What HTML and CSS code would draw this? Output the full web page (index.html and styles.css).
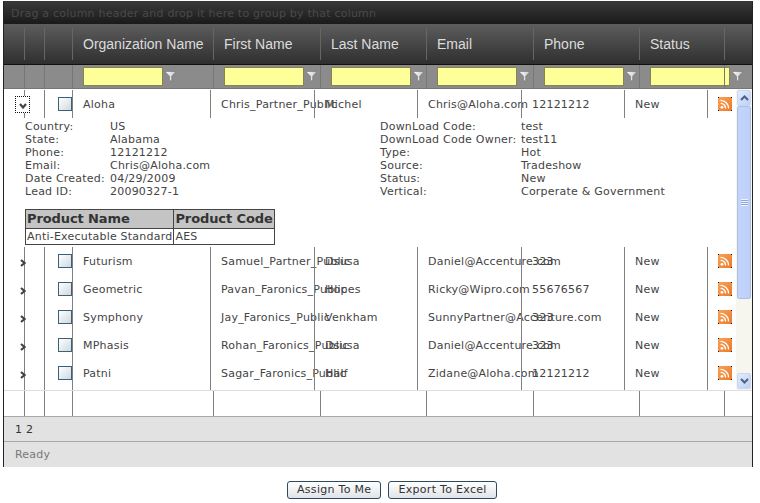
FILE: index.html
```html
<!DOCTYPE html>
<html lang="en">
<head>
<meta charset="utf-8">
<title>Leads</title>
<link rel="stylesheet" href="styles.css">
</head>
<body>
<svg class="defs" width="0" height="0" aria-hidden="true">
  <defs>
    <linearGradient id="rssg" x1="0" y1="0" x2="1" y2="1"><stop offset="0" stop-color="#f6a25a"/><stop offset="1" stop-color="#ee7a2a"/></linearGradient>
    <linearGradient id="fung" x1="0" y1="0" x2="1" y2="0"><stop offset="0" stop-color="#ffffff"/><stop offset="1" stop-color="#c8c8c8"/></linearGradient>
    <symbol id="rss" viewBox="0 0 14 14">
      <rect width="14" height="14" fill="#1a1a1a"/>
      <rect x="0" y="1" width="14" height="12" fill="url(#rssg)"/>
      <rect x="1" y="0" width="12" height="14" fill="url(#rssg)"/>
      <circle cx="4" cy="10.3" r="1.4" fill="#fff"/>
      <path d="M2.6 6.4a5 5 0 0 1 5 5M2.6 3.4a8 8 0 0 1 8 8" fill="none" stroke="#fff" stroke-width="1.4"/>
    </symbol>
    <symbol id="funnel" viewBox="0 0 11 11">
      <path d="M0 0.5H11L6.7 5.2V10.5L4.5 9V5.2Z" fill="url(#fung)" stroke="#666" stroke-width="0.5"/>
    </symbol>
    <symbol id="chev-r" viewBox="0 0 6 8"><path d="M1 1L4.5 4L1 7" fill="none" stroke="#444" stroke-width="2.2"/></symbol>
    <symbol id="chev-d" viewBox="0 0 8 6"><path d="M1 1L4 4.5L7 1" fill="none" stroke="#444" stroke-width="2.2"/></symbol>
  </defs>
</svg>
<main class="page">
  <section class="grid">
    <div class="group-bar">Drag a column header and drop it here to group by that column</div>

    <div class="cols head">
      <div class="hc"></div><div class="hc sep"></div><div class="hc sep"></div>
      <div class="hc sep">Organization Name</div>
      <div class="hc sep">First Name</div>
      <div class="hc sep">Last Name</div>
      <div class="hc sep">Email</div>
      <div class="hc sep">Phone</div>
      <div class="hc sep">Status</div>
      <div class="hc sep"></div>
    </div>

    <div class="cols filter">
      <div class="fc"></div><div class="fc sep"></div><div class="fc sep"></div>
      <div class="fc sep"><input class="fi" type="text"><svg class="funnel"><use href="#funnel"/></svg></div>
      <div class="fc sep"><input class="fi" type="text"><svg class="funnel"><use href="#funnel"/></svg></div>
      <div class="fc sep"><input class="fi" type="text"><svg class="funnel"><use href="#funnel"/></svg></div>
      <div class="fc sep"><input class="fi" type="text"><svg class="funnel"><use href="#funnel"/></svg></div>
      <div class="fc sep"><input class="fi" type="text"><svg class="funnel"><use href="#funnel"/></svg></div>
      <div class="fc sep"><input class="fi" type="text"><svg class="funnel"><use href="#funnel"/></svg></div>
      <div class="fc sep"></div>
    </div>

    <div class="viewport">
      <div class="rows">
        <div class="row first">
          <div class="c exp"><span class="focus"><svg class="chev-d"><use href="#chev-d"/></svg></span></div>
          <div class="c"></div>
          <div class="c chk"><span class="box"></span></div>
          <div class="c">Aloha</div>
          <div class="c">Chris_Partner_Public</div>
          <div class="c">Michel</div>
          <div class="c">Chris@Aloha.com</div>
          <div class="c">12121212</div>
          <div class="c">New</div>
          <div class="c ic"><svg class="rss"><use href="#rss"/></svg></div>
        </div>

        <div class="detail">
          <div class="props">
            <dl class="dl left">
              <dt>Country:</dt><dd>US</dd>
              <dt>State:</dt><dd>Alabama</dd>
              <dt>Phone:</dt><dd>12121212</dd>
              <dt>Email:</dt><dd>Chris@Aloha.com</dd>
              <dt>Date Created:</dt><dd>04/29/2009</dd>
              <dt>Lead ID:</dt><dd>20090327-1</dd>
            </dl>
            <dl class="dl right">
              <dt>DownLoad Code:</dt><dd>test</dd>
              <dt>DownLoad Code Owner:</dt><dd>test11</dd>
              <dt>Type:</dt><dd>Hot</dd>
              <dt>Source:</dt><dd>Tradeshow</dd>
              <dt>Status:</dt><dd>New</dd>
              <dt>Vertical:</dt><dd>Corperate &amp; Government</dd>
            </dl>
          </div>
          <table class="products">
            <tr><th>Product Name</th><th>Product Code</th></tr>
            <tr><td>Anti-Executable Standard</td><td>AES</td></tr>
          </table>
        </div>

        <div class="row">
          <div class="c exp"><svg class="chev-r"><use href="#chev-r"/></svg></div>
          <div class="c"></div>
          <div class="c chk"><span class="box"></span></div>
          <div class="c">Futurism</div>
          <div class="c">Samuel_Partner_Public</div>
          <div class="c">Dsusa</div>
          <div class="c">Daniel@Accenture.com</div>
          <div class="c">323</div>
          <div class="c">New</div>
          <div class="c ic"><svg class="rss"><use href="#rss"/></svg></div>
        </div>
        <div class="row">
          <div class="c exp"><svg class="chev-r"><use href="#chev-r"/></svg></div>
          <div class="c"></div>
          <div class="c chk"><span class="box"></span></div>
          <div class="c">Geometric</div>
          <div class="c">Pavan_Faronics_Public</div>
          <div class="c">Hopes</div>
          <div class="c">Ricky@Wipro.com</div>
          <div class="c">55676567</div>
          <div class="c">New</div>
          <div class="c ic"><svg class="rss"><use href="#rss"/></svg></div>
        </div>
        <div class="row">
          <div class="c exp"><svg class="chev-r"><use href="#chev-r"/></svg></div>
          <div class="c"></div>
          <div class="c chk"><span class="box"></span></div>
          <div class="c">Symphony</div>
          <div class="c">Jay_Faronics_Public</div>
          <div class="c">Venkham</div>
          <div class="c">SunnyPartner@Accenture.com</div>
          <div class="c">323</div>
          <div class="c">New</div>
          <div class="c ic"><svg class="rss"><use href="#rss"/></svg></div>
        </div>
        <div class="row">
          <div class="c exp"><svg class="chev-r"><use href="#chev-r"/></svg></div>
          <div class="c"></div>
          <div class="c chk"><span class="box"></span></div>
          <div class="c">MPhasis</div>
          <div class="c">Rohan_Faronics_Public</div>
          <div class="c">Dsusa</div>
          <div class="c">Daniel@Accenture.com</div>
          <div class="c">323</div>
          <div class="c">New</div>
          <div class="c ic"><svg class="rss"><use href="#rss"/></svg></div>
        </div>
        <div class="row last">
          <div class="c exp"><svg class="chev-r"><use href="#chev-r"/></svg></div>
          <div class="c"></div>
          <div class="c chk"><span class="box"></span></div>
          <div class="c">Patni</div>
          <div class="c">Sagar_Faronics_Public</div>
          <div class="c">Half</div>
          <div class="c">Zidane@Aloha.com</div>
          <div class="c">12121212</div>
          <div class="c">New</div>
          <div class="c ic"><svg class="rss"><use href="#rss"/></svg></div>
        </div>
      </div>

      <div class="scrollbar">
        <div class="sb-btn"><svg class="sb-arrow" viewBox="0 0 9 6"><path d="M1 5L4.5 1.5L8 5" fill="none" stroke="#4d6185" stroke-width="2"/></svg></div>
        <div class="sb-thumb"><span class="grip"></span></div>
        <div class="sb-track"></div>
        <div class="sb-btn"><svg class="sb-arrow" viewBox="0 0 9 6"><path d="M1 1L4.5 4.5L8 1" fill="none" stroke="#4d6185" stroke-width="2"/></svg></div>
      </div>
    </div>

    <div class="cols spacer">
      <div></div><div class="sep"></div><div class="sep"></div><div class="sep"></div><div class="sep"></div><div class="sep"></div><div class="sep"></div><div class="sep"></div><div class="sep"></div><div class="sep"></div>
    </div>

    <div class="pager">1 2</div>
    <div class="status">Ready</div>
  </section>

  <div class="actions">
    <button class="btn" type="button">Assign To Me</button>
    <button class="btn" type="button">Export To Excel</button>
  </div>
</main>
</body>
</html>
```
FILE: styles.css
```css
* { box-sizing: border-box; }
html, body { margin: 0; background: #fff; }
.defs { position: absolute; }
body { font: 11px/13px "DejaVu Sans", Verdana, sans-serif; letter-spacing: .22px; color: #444; }
.page { padding: 1px 0 0 3px; width: 760px; }
.grid { width: 750px; height: 466px; border: 1px solid #222; border-top-color: #333; display: flex; flex-direction: column; background: #fff; }
.group-bar { height: 22px; flex: none; padding-left: 7px; line-height: 23px; color: #4a4a4a; background: linear-gradient(#383838, #1a1a1a); white-space: nowrap; }
.cols { display: grid; grid-template-columns: 20px 20px 28px 141px 107px 106px 107px 106px 85px 28px; flex: none; }
.head { height: 41px; background: linear-gradient(#5d5d5d, #2f2f2f); border-bottom: 1px solid #111; font: 14px/1 "Liberation Sans", Arial, sans-serif; letter-spacing: 0; color: #dcdcdc; }
.hc { display: flex; align-items: center; padding: 0 0 0 10px; margin: 4px 0 4px; white-space: nowrap; }
.hc.sep { border-left: 1px solid #666; }
.filter { height: 24px; background: #8b8b8b; border-bottom: 1px solid #777; }
.fc { display: flex; align-items: center; padding-left: 10px; padding-bottom: 1px; gap: 2px; }
.fc.sep { border-left: 1px solid #777; }
.fi { width: 80px; height: 19px; padding: 0; border: 1px solid #85854e; background: #ffff99; flex: none; }
.funnel { width: 11px; height: 11px; flex: none; }
.viewport { height: 302px; flex: none; display: flex; border-bottom: 1px solid #ddd; }
.rows { width: 732px; flex: none; }
.row { display: grid; grid-template-columns: 20px 20px 28px 138px 104px 103px 104px 103px 83px 29px; height: 28px; }
.row.first { height: 29px; padding-top: 1px; }
.row.first .c { height: 28px; }
.row.last { height: 31px; padding-bottom: 3px; }
.row.last .c { height: 31px; padding-bottom: 3px; }
.c { display: flex; align-items: center; padding-left: 10px; white-space: nowrap; border-left: 1px solid #808080; }
.c.exp { border-left: 0; padding: 0; justify-content: flex-end; position: relative; }
.c.chk { justify-content: flex-end; padding: 0 0 1px 0; }
.c.ic { padding-bottom: 1px; padding-left: 10px; }
.box { width: 14px; height: 14px; border: 1px solid #3d5f78; background: linear-gradient(135deg, #fff, #cfd9df); }
.rss { width: 14px; height: 14px; }
.chev-r { width: 6px; height: 8px; margin-right: -2px; margin-top: 3px; }
.focus { width: 15px; height: 17px; margin-right: -6px; display: flex; align-items: center; justify-content: center; border: 1px dotted #111; background: #fff; position: relative; }
.chev-d { width: 8px; height: 6px; margin-top: 3px; }
.detail { height: 129px; padding: 2px 0 0 21px; }
.props { display: flex; height: 89px; }
.dl { display: grid; margin: 0; grid-auto-rows: 13px; align-content: start; }
.dl dt, .dl dd { margin: 0; white-space: nowrap; }
.left { width: 355px; grid-template-columns: 85px 1fr; }
.right { grid-template-columns: 141px 1fr; }
.products { border-collapse: collapse; border: 1px solid #444; }
.products th, .products td { border: 1px solid #444; padding: 0 1px; text-align: left; white-space: nowrap; }
.products th { background: #c4c4c4; font-size: 13px; line-height: 18px; letter-spacing: -.1px; color: #333; }
.products td { line-height: 15px; }
.scrollbar { width: 16px; flex: none; display: flex; flex-direction: column; background: #f6f6ef; padding: 1px 1px 1px 1px; }
.sb-btn { height: 16px; flex: none; display: flex; align-items: center; justify-content: center; background: linear-gradient(135deg, #e3ecfd, #bcd0f8); border: 1px solid #c9d6f2; border-radius: 2px; }
.sb-arrow { width: 9px; height: 6px; }
.sb-thumb { height: 193px; flex: none; display: flex; align-items: center; justify-content: center; background: linear-gradient(90deg, #c3d5fb, #bdd0f9); border: 1px solid #aebfe6; border-radius: 2px; }
.grip { width: 7px; height: 7px; background: repeating-linear-gradient(#eef3ff 0 1px, #8ea6d8 1px 2px); }
.sb-track { flex: 1; }
.spacer { height: 25px; }
.spacer .sep { border-left: 1px solid #808080; }
.pager { height: 25px; flex: none; padding-left: 11px; line-height: 25px; background: #e2e2e2; border-top: 1px solid #a8a8a8; color: #333; }
.status { flex: 1; padding-left: 11px; line-height: 25px; background: #e2e2e2; border-top: 1px solid #a8a8a8; color: #777; }
.actions { display: flex; gap: 7px; padding: 14px 0 0 284px; }
.btn { height: 18px; padding: 0 9px; font: 11px/14px "DejaVu Sans", Verdana, sans-serif; letter-spacing: .3px; color: #333; background: linear-gradient(#fff, #dfe3e8); border: 1px solid #2f4a5e; border-radius: 3px; white-space: nowrap; }
```
